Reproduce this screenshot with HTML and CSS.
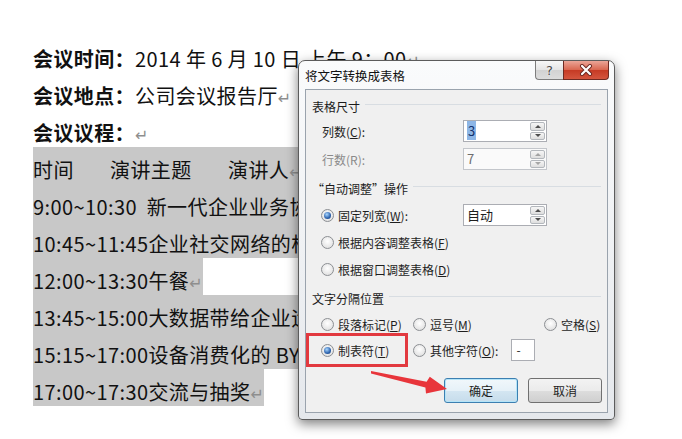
FILE: index.html
```html
<!DOCTYPE html>
<html>
<head>
  <meta charset="utf-8">
  <link rel="stylesheet" href="styles.css">
</head>
<body>
  <div class="doc">
    <p class="line"><b>会议时间：</b>2014 年 6 月 10 日 上午 9：00<span class="ret">↵</span></p>
    <p class="line"><b>会议地点：</b>公司会议报告厅<span class="ret">↵</span></p>
    <p class="line"><b>会议议程：</b><span class="ret">↵</span></p>
    <p class="line"><span class="sel"><span class="tab1">时间</span><span class="tab2">演讲主题</span>演讲人<span class="ret">↵</span></span></p>
    <p class="line"><span class="sel">9:00~10:30&nbsp; 新一代企业业务协同平台<span class="ret">↵</span></span></p>
    <p class="line"><span class="sel">10:45~11:45企业社交网络的构建<span class="ret">↵</span></span></p>
    <p class="line"><span class="sel">12:00~13:30午餐<span class="ret">↵</span></span></p>
    <p class="line"><span class="sel">13:45~15:00大数据带给企业运营<span class="ret">↵</span></span></p>
    <p class="line"><span class="sel">15:15~17:00设备消费化的 BYOD<span class="ret">↵</span></span></p>
    <p class="line"><span class="sel">17:00~17:30交流与抽奖<span class="ret">↵</span></span></p>
  </div>

  <div class="dialog">
    <div class="titlebar">
      <span class="title">将文字转换成表格</span>
      <div class="caption-buttons">
        <span class="btn-help">?</span>
        <span class="btn-close">
          <svg width="16" height="12" viewBox="0 0 16 12">
            <path d="M4 2 L12 10 M12 2 L4 10" stroke="#6b2620" stroke-width="4" stroke-linecap="round"/>
            <path d="M4 2 L12 10 M12 2 L4 10" stroke="#fff" stroke-width="2.2" stroke-linecap="round"/>
          </svg>
        </span>
      </div>
    </div>

    <div class="client">
      <div class="group-title">表格尺寸</div>
      <div class="field-row">
        <span class="field-label">列数(<u>C</u>):</span>
        <div class="spin"><span class="val"><span class="selected">3</span></span><span class="arrows"><i class="up"></i><i class="down"></i></span></div>
      </div>
      <div class="field-row disabled">
        <span class="field-label">行数(R):</span>
        <div class="spin"><span class="val">7</span><span class="arrows"><i class="up"></i><i class="down"></i></span></div>
      </div>

      <div class="group-title second">“自动调整”操作</div>
      <div class="radio-row first">
        <span class="radio on"></span>
        <span class="radio-label">固定列宽(<u>W</u>):</span>
        <div class="spin"><span class="val">自动</span><span class="arrows"><i class="up"></i><i class="down"></i></span></div>
      </div>
      <div class="radio-row">
        <span class="radio"></span>
        <span>根据内容调整表格(<u>F</u>)</span>
      </div>
      <div class="radio-row">
        <span class="radio"></span>
        <span>根据窗口调整表格(<u>D</u>)</span>
      </div>

      <div class="group-title second">文字分隔位置</div>
      <div class="sep-grid">
        <div class="opt"><span class="radio"></span><span>段落标记(<u>P</u>)</span></div>
        <div class="opt"><span class="radio"></span><span>逗号(<u>M</u>)</span></div>
        <div class="opt"><span class="radio"></span><span>空格(<u>S</u>)</span></div>
        <div class="opt"><span class="radio on"></span><span>制表符(<u>T</u>)</span></div>
        <div class="opt"><span class="radio"></span><span>其他字符(<u>O</u>):</span><span class="char-box">-</span></div>
      </div>

      <div class="buttons">
        <button class="button default">确定</button>
        <button class="button">取消</button>
      </div>
    </div>
  </div>

  <div class="mark-box"></div>
  <svg class="mark-arrow" width="682" height="439" viewBox="0 0 682 439">
    <polygon points="371,371 426.6,381.8 429.8,376.8 447,389 426,393.5 425.4,387.4 371,373.5" fill="#e8353b"/>
  </svg>
</body>
</html>
```

FILE: styles.css
```css
body {
  margin: 0;
  width: 682px;
  height: 439px;
  overflow: hidden;
  position: relative;
  background: #fff;
  font-family: "Noto Sans CJK SC", "Noto Sans", sans-serif;
  color: #111;
}

.doc {
  padding: 36px 0 0 33px;
}

/* text sits a little low in each 37px line, as in Word */
.line {
  margin: 0;
  height: 28px;
  padding-top: 9px;
  line-height: 28px;
  font-size: 20px;
  letter-spacing: 0.4px;
  white-space: nowrap;
}

.line b {
  font-weight: 700;
}

.sel {
  display: inline-block;
  vertical-align: top;
  margin-top: -9px;
  padding-top: 9px;
  height: 28px;
  background: #c8c8c8;
}

.tab1 {
  display: inline-block;
  width: 77px;
}

.tab2 {
  display: inline-block;
  width: 118px;
}

.ret {
  font-family: "DejaVu Sans", sans-serif;
  font-size: 16px;
  color: #8e8e8e;
}

/* dialog window */
.dialog {
  position: absolute;
  left: 298px;
  top: 60px;
  width: 317px;
  height: 360px;
  box-sizing: border-box;
  border: 1px solid #5c5c5c;
  border-radius: 7px 7px 4px 4px;
  background: linear-gradient(#fafbfc, #e5e8ec);
  box-shadow: 0 4px 12px rgba(0,0,0,0.5);
  padding: 0 6px 6px 6px;
  display: flex;
  flex-direction: column;
  font-size: 12px;
  color: #1e1e1e;
}

.titlebar {
  height: 28px;
  display: flex;
  align-items: center;
}

.title {
  font-size: 12.5px;
  color: #111;
}

.caption-buttons {
  margin-left: auto;
  margin-right: -1px;
  align-self: flex-start;
  display: flex;
}

.btn-help,
.btn-close {
  height: 19px;
  box-sizing: border-box;
  border: 1px solid #7d7d7d;
  border-top: none;
  display: flex;
  align-items: center;
  justify-content: center;
}

.btn-help {
  width: 28px;
  border-right: none;
  border-radius: 0 0 0 4px;
  background: linear-gradient(#f7f7f7, #e4e4e4 50%, #d2d2d2 51%, #dcdcdc);
  font-family: "DejaVu Sans", sans-serif;
  font-size: 13px;
  color: #4a4a4a;
  text-shadow: 0 0 2px #fff;
}

.btn-close {
  width: 46px;
  border-color: #6e2a22;
  border-radius: 0 0 4px 0;
  background: linear-gradient(#eba597, #d9664f 50%, #c63a24 51%, #d4553e);
}

.client {
  flex: 1;
  border: 1px solid #9aa3ad;
  background: #f0f0f0;
  padding: 6px 0 0 0;
}

.group-title {
  height: 20px;
  display: flex;
  align-items: center;
  padding-left: 6px;
  color: #1a1a1a;
}

.group-title::after {
  content: '';
  flex: 1;
  margin: 0 6px 4px 5px;
  border-top: 1px solid #d8dde2;
}

.group-title.second {
  margin-top: 6px;
}

.field-row {
  height: 26px;
  margin-top: 2px;
  padding-left: 16px;
  display: flex;
  align-items: center;
}

.field-label {
  width: 141px;
}

.field-row.disabled {
  color: #8a8a8a;
}

.spin {
  width: 84px;
  height: 22px;
  box-sizing: border-box;
  border: 1px solid #abadb3;
  background: #fff;
  display: flex;
}

.spin .val {
  flex: 1;
  padding-left: 3px;
  line-height: 20px;
  font-size: 13px;
}

.spin .selected {
  background: #8db6e6;
  color: #12306a;
  padding: 0 1px;
}

.disabled .spin {
  border-color: #c3c6cb;
  background: #fafafa;
}

.disabled .spin .val {
  color: #6e6e6e;
}

.arrows {
  width: 15px;
  margin: 1px;
  display: flex;
  flex-direction: column;
  gap: 1px;
}

.arrows i {
  flex: 1;
  border: 1px solid #b3b7bc;
  border-radius: 2px;
  background: linear-gradient(#f6f6f6, #dedede);
  display: flex;
  align-items: center;
  justify-content: center;
}

.arrows i::after {
  content: '';
  border-left: 3px solid transparent;
  border-right: 3px solid transparent;
}

.arrows .up::after {
  border-bottom: 3px solid #4d4d4d;
}

.arrows .down::after {
  border-top: 3px solid #4d4d4d;
}

.disabled .arrows i::after {
  opacity: 0.45;
}

.radio-row {
  height: 26px;
  margin-top: 1px;
  padding-left: 15px;
  display: flex;
  align-items: center;
}

.radio-row.first {
  margin-top: 4px;
}

.radio-label {
  width: 125px;
}

.radio {
  flex: none;
  position: relative;
  width: 13px;
  height: 13px;
  box-sizing: border-box;
  margin-right: 4px;
  border-radius: 50%;
  border: 1px solid #8c8f93;
  background: radial-gradient(circle at 50% 40%, #ffffff, #d9d9d9);
}

.radio.on::after {
  content: '';
  position: absolute;
  left: 2px;
  top: 2px;
  width: 7px;
  height: 7px;
  border-radius: 50%;
  background: radial-gradient(circle at 40% 35%, #a9d7ff, #2c62ad 60%, #173a70);
}

.sep-grid {
  margin-top: 3px;
  padding-left: 15px;
  display: grid;
  grid-template-columns: 92px 131px auto;
  grid-auto-rows: 26px;
}

.opt {
  display: flex;
  align-items: center;
}

.char-box {
  width: 24px;
  height: 22px;
  box-sizing: border-box;
  margin-left: 13px;
  border: 1px solid #abadb3;
  background: #fff;
  padding-left: 4px;
  line-height: 20px;
}

.buttons {
  margin-top: 15px;
  padding-right: 5px;
  display: flex;
  justify-content: flex-end;
  gap: 10px;
}

.button {
  width: 74px;
  height: 25px;
  margin: 0;
  border: 1px solid #707070;
  border-radius: 3px;
  background: linear-gradient(#f3f3f3, #ebebeb 50%, #dddddd 51%, #cfcfcf);
  font-family: "Noto Sans CJK SC", sans-serif;
  font-size: 12px;
  color: #1e1e1e;
  padding: 0;
}

.button.default {
  border-color: #3c7fb1;
  box-shadow: inset 0 0 0 1px #b4e4f8;
  background: linear-gradient(#f1f7fb, #e6f1f8 50%, #d4e6f2 51%, #c6dceb);
}

/* annotations drawn over the screenshot */
.mark-box {
  position: absolute;
  left: 306px;
  top: 333px;
  width: 96px;
  height: 28px;
  border: 3px solid #e2393f;
}

.mark-arrow {
  position: absolute;
  left: 0;
  top: 0;
  pointer-events: none;
}
```
